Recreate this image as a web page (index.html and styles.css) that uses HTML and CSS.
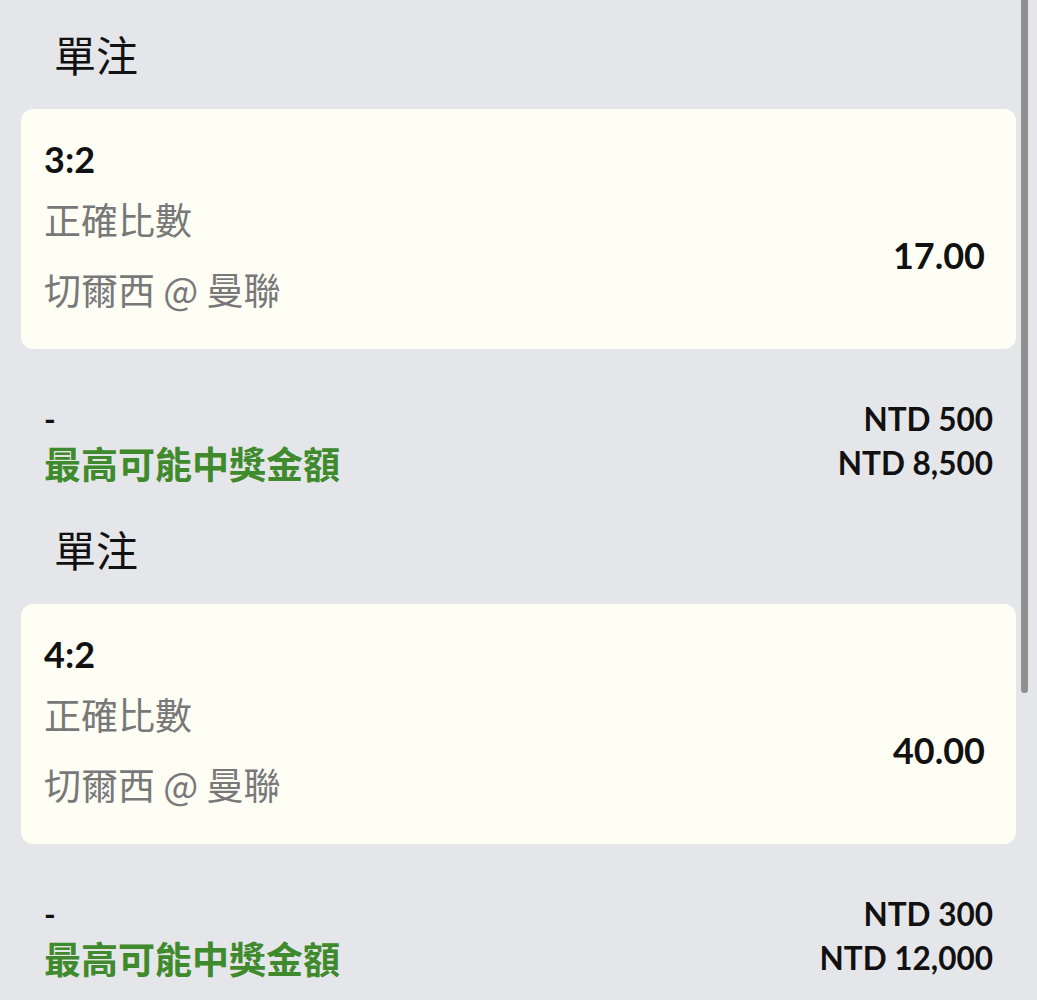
FILE: index.html
```html
<!DOCTYPE html>
<html lang="zh-Hant">
<head>
<meta charset="utf-8">
<title>單注</title>
<link rel="stylesheet" href="styles.css">
</head>
<body>
<div class="page">
  <section class="bet">
    <h2 class="bet-title">單注</h2>
    <div class="card">
      <div class="card-info">
        <div class="score">3:2</div>
        <div class="market">正確比數</div>
        <div class="match">切爾西 @ 曼聯</div>
      </div>
      <div class="odds">17.00</div>
    </div>
    <div class="summary">
      <div class="row">
        <span class="dash">-</span>
        <span class="amount">NTD 500</span>
      </div>
      <div class="row">
        <span class="win-label">最高可能中獎金額</span>
        <span class="amount">NTD 8,500</span>
      </div>
    </div>
  </section>
  <section class="bet">
    <h2 class="bet-title">單注</h2>
    <div class="card">
      <div class="card-info">
        <div class="score">4:2</div>
        <div class="market">正確比數</div>
        <div class="match">切爾西 @ 曼聯</div>
      </div>
      <div class="odds">40.00</div>
    </div>
    <div class="summary">
      <div class="row">
        <span class="dash">-</span>
        <span class="amount">NTD 300</span>
      </div>
      <div class="row">
        <span class="win-label">最高可能中獎金額</span>
        <span class="amount">NTD 12,000</span>
      </div>
    </div>
  </section>
</div>
<div class="scrollbar"></div>
</body>
</html>
```
FILE: styles.css
```css
html, body {
  margin: 0;
  padding: 0;
  background: #e5e6e9;
  height: 1000px;
  overflow: hidden;
}
body {
  font-family: Lato, "Noto Sans CJK TC", sans-serif;
  color: #111;
}
.page {
  display: flex;
  flex-direction: column;
}
.bet {
  display: flex;
  flex-direction: column;
  padding-top: 24px;
  padding-bottom: 10px;
}
.bet-title {
  margin: 0;
  padding-left: 54px;
  font-family: "Noto Sans CJK TC", sans-serif;
  font-weight: 400;
  font-size: 42px;
  line-height: 60px;
  color: #111;
}
.card {
  margin: 25px 21px 0 21px;
  height: 240px;
  box-sizing: border-box;
  background: #fefef5;
  border-radius: 12px;
  display: flex;
  justify-content: space-between;
  padding: 20px 31px 0 23px;
}
.card-info {
  display: flex;
  flex-direction: column;
}
.score {
  font-weight: 700;
  font-size: 36px;
  line-height: 60px;
}
.market, .match {
  font-family: "Noto Sans CJK TC", sans-serif;
  font-size: 37px;
  line-height: 60px;
  color: #787878;
}
.match {
  margin-top: 10px;
}
.odds {
  font-weight: 700;
  font-size: 36px;
  line-height: 60px;
  margin-top: 96px;
}
.summary {
  margin-top: 48px;
  padding: 0 44px;
  display: flex;
  flex-direction: column;
}
.row {
  display: flex;
  justify-content: space-between;
  align-items: center;
  height: 44px;
}
.row > span {
  line-height: 44px;
}
.dash {
  font-weight: 700;
  font-size: 31.5px;
}
.amount {
  font-weight: 700;
  font-size: 31.5px;
}
.win-label {
  font-family: "Noto Sans CJK TC", sans-serif;
  font-weight: 700;
  font-size: 37px;
  color: #3f8a2c;
}
.scrollbar {
  position: fixed;
  top: -6px;
  left: 1021px;
  width: 7px;
  height: 699px;
  border-radius: 4px;
  background: #8f8f8f;
}
```
